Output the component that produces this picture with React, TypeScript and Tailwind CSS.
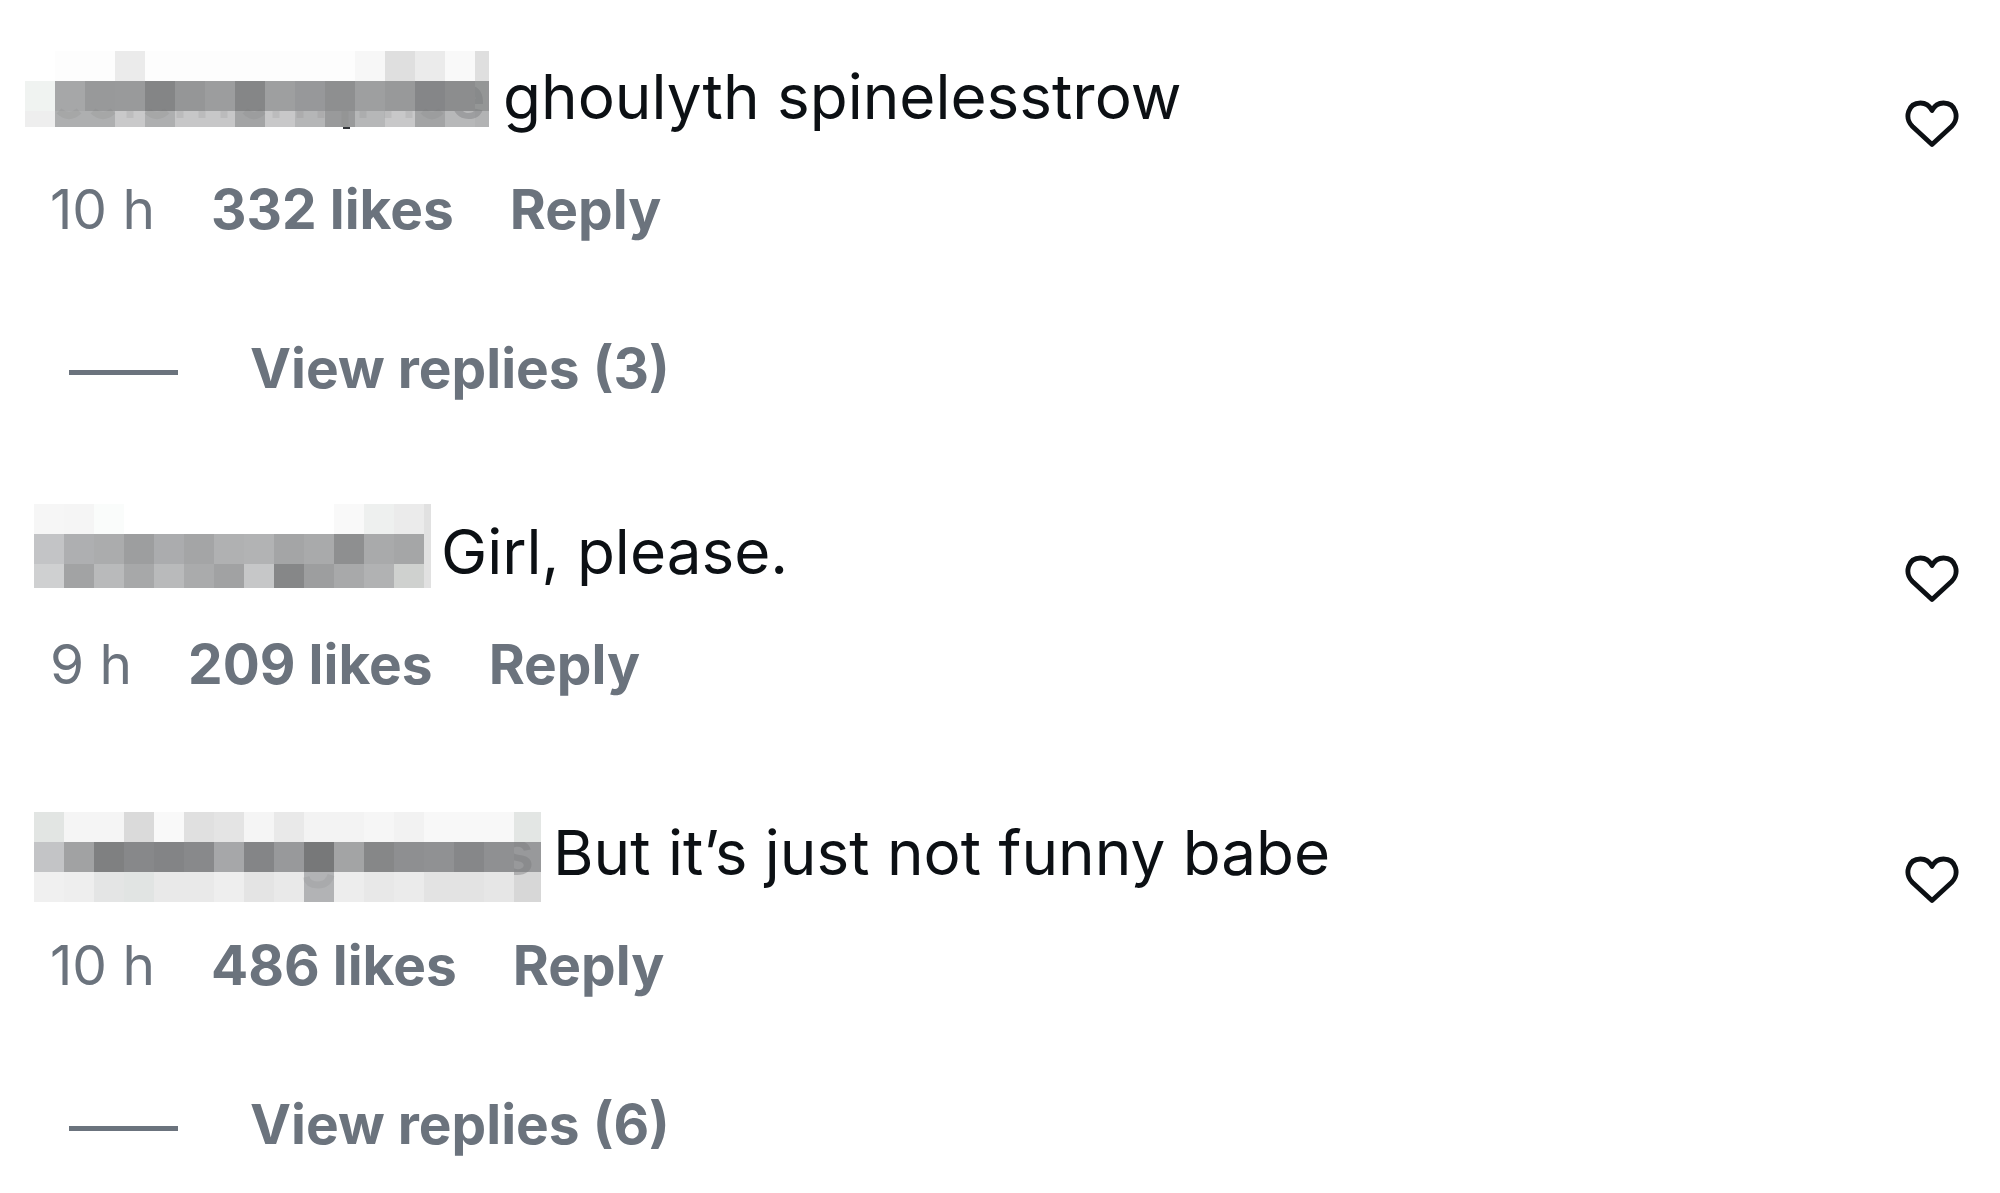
type Tile = [x: number, y: number, w: number, h: number, fill: string]

type Mask = {
  width: number
  tiles: Tile[]
  // faint strokes that show through below the tiles
  traces?: string
  letter?: { char: string; x: number; y: number; clip: string }
}

type Comment = {
  id: number
  text: string
  age: string
  likes: number
  replies: number
  mask: Mask
}

// Builds one strip of tiles, 30px wide each; the last one may be cut off
function strip(x: number, y: number, h: number, end: number, fills: string[]): Tile[] {
  return fills.map((fill, i) => {
    const left = x + i * 30
    return [left, y, Math.min(30, end - left), h, fill]
  })
}

const comments: Comment[] = [
  {
    id: 1,
    text: 'ghoulyth spinelesstrow',
    age: '10 h',
    likes: 332,
    replies: 3,
    mask: {
      width: 468,
      tiles: [
        ...strip(30, 2, 30, 464, ['#fdfdfd', '#fdfdfd', '#ebebeb', '#fdfdfd', '#fdfdfd', '#fdfdfd', '#fdfdfd', '#fdfdfd', '#fdfdfd', '#fdfdfd', '#f7f7f7', '#dfdfdf', '#ebebeb', '#f9f9f9', '#dfdfdf']),
        ...strip(0, 32, 30, 464, ['#f0f3f1', '#a6a7a8', '#98999a', '#999a9b', '#848586', '#959697', '#9c9d9e', '#858687', '#9e9fa0', '#97989a', '#8e8f90', '#9e9fa0', '#98999a', '#858688', '#8c8d8e', '#959697']),
        ...strip(0, 62, 16, 464, ['#eeeeee', '#aeafb0', '#aeafb0', '#c9c9ca', '#aeafb0', '#c7c7c8', '#c7c7c8', '#a3a4a5', '#c8c8c9', '#b5b6b7', '#999a9b', '#b6b7b8', '#c8c8c9', '#a3a4a5', '#b7b8b9', '#b2b3b4']),
        [318, 78, 7, 2, '#33363a'],
      ],
      traces: 'M34 62q10 9 20 0M68 62q10 9 20 0M105 62v7M122 62q10 9 20 0M155 62v7M177 62v7M199 62v7M220 62q9 9 18 0M251 62v7M275 62v7M296 62v7M320 62v16M338 62v7M363 62v7M384 62v7M398 62q9 9 18 0',
      letter: { char: 'e', x: 425, y: 69, clip: 'M450 32h14v46h-38v-16h24z' },
    },
  },
  {
    id: 2,
    text: 'Girl, please.',
    age: '9 h',
    likes: 209,
    replies: 0,
    mask: {
      width: 406,
      tiles: [
        ...strip(9, 0, 30, 399, ['#f6f6f6', '#f5f5f5', '#fafcfb', '#ffffff', '#ffffff', '#ffffff', '#ffffff', '#ffffff', '#ffffff', '#ffffff', '#f9f9f9', '#eef0ef', '#ebebeb']),
        ...strip(9, 30, 30, 399, ['#c3c4c6', '#aeafb1', '#abacad', '#9d9e9f', '#abacae', '#a4a5a6', '#b0b1b2', '#b2b3b4', '#a4a5a6', '#a9aaab', '#8e8f90', '#a9aaab', '#a5a6a7']),
        ...strip(9, 60, 24, 399, ['#cfd0d1', '#a2a3a4', '#b9babb', '#a7a8a9', '#b9babb', '#aaabac', '#a1a2a3', '#c6c7c8', '#868788', '#9d9e9f', '#a8a9aa', '#b1b2b3', '#cfd1cf']),
        [399, 0, 7, 84, '#e1e1e1'],
      ],
    },
  },
  {
    id: 3,
    text: 'But it’s just not funny babe',
    age: '10 h',
    likes: 486,
    replies: 6,
    mask: {
      width: 518,
      tiles: [
        ...strip(9, 7, 30, 516, ['#e2e5e3', '#f5f5f5', '#f5f5f5', '#dadada', '#f9f9f9', '#e0e0e0', '#e4e4e4', '#f5f5f5', '#e9e9e9', '#f3f3f3', '#f3f3f3', '#f6f6f6', '#f2f2f2', '#f8f8f8', '#f8f8f8', '#f8f8f8', '#e3e6e4']),
        ...strip(9, 37, 30, 516, ['#c3c4c6', '#a1a2a3', '#7f8081', '#87888a', '#838486', '#88898b', '#a6a7a9', '#848587', '#98999b', '#777879', '#a3a4a5', '#868788', '#8e8f91', '#909193', '#868789', '#8f9092', '#98999b']),
        ...strip(9, 67, 30, 516, ['#f0f0f0', '#eeeeee', '#e4e5e5', '#e1e4e3', '#e9e9e9', '#e9e9e9', '#eeeeee', '#e4e4e4', '#e9e9e9', '#b2b3b5', '#ededed', '#e8e8e8', '#ebebeb', '#e3e3e3', '#e3e3e3', '#e6e6e6', '#d7d7d7']),
      ],
      traces: 'M281 72q2 8 12 8t13-10',
      letter: { char: 's', x: 476, y: 69, clip: 'M489 37h27v60h-27z' },
    },
  },
]

function HiddenName({ mask, id }: { mask: Mask; id: string }) {
  return (
    <svg width={mask.width} height="100" className="shrink-0" aria-hidden="true">
      <g shapeRendering="crispEdges">
        {mask.tiles.map(([x, y, w, h, fill], i) => (
          <rect key={i} x={x} y={y} width={w} height={h} fill={fill} />
        ))}
      </g>
      {mask.traces && <path d={mask.traces} fill="none" stroke="#77787a" strokeWidth="7" opacity="0.15" />}
      {mask.letter && (
        <>
          <clipPath id={id}>
            <path d={mask.letter.clip} />
          </clipPath>
          <text
            x={mask.letter.x}
            y={mask.letter.y}
            clipPath={`url(#${id})`}
            fontSize="60"
            fontWeight="600"
            fill="#77787a"
            opacity="0.4"
          >
            {mask.letter.char}
          </text>
        </>
      )}
    </svg>
  )
}

function HeartIcon() {
  return (
    <svg
      viewBox="0 0 54 48"
      className="h-12 w-[54px]"
      fill="none"
      stroke="currentColor"
      strokeWidth="4.8"
      strokeLinejoin="round"
      aria-hidden="true"
    >
      <path d="M27 44.5 7.5 26.500C-1 18 3 3 15.500 3c5 0 9 2.500 11.500 7.500C29.500 5.500 33.500 3 38.500 3 51 3 55 18 46.500 26.500Z" />
    </svg>
  )
}

function CommentRow({ comment }: { comment: Comment }) {
  return (
    <li className="flex items-start justify-between pb-[107px] last:pb-0">
      <div>
        <div className="flex gap-2.5">
          <HiddenName mask={comment.mask} id={`name-${comment.id}`} />
          <p className="pt-2 text-[62px] leading-[80px] text-[#0c1014]">{comment.text}</p>
        </div>

        <div className="mt-[26px] flex gap-14 pl-[25px] text-[55px] leading-[68px]">
          <span>{comment.age}</span>
          <button type="button" className="font-bold">{comment.likes} likes</button>
          <button type="button" className="font-bold">Reply</button>
        </div>

        {comment.replies > 0 && (
          <button type="button" className="mt-24 flex items-center pl-11 text-[55px] leading-[58px] font-bold">
            <span className="mt-2 mr-[72px] h-[5px] w-[109px] bg-current" />
            View replies ({comment.replies})
          </button>
        )}
      </div>

      <button type="button" aria-label="Like" className="mt-[51px] text-[#0c1014]">
        <HeartIcon />
      </button>
    </li>
  )
}

export default function App() {
  return (
    <main className="min-h-screen bg-white font-['Inter',sans-serif] text-[#6b737d]">
      <ul className="pt-[49px] pr-[41px] pl-[25px]">
        {comments.map((comment) => (
          <CommentRow key={comment.id} comment={comment} />
        ))}
      </ul>
    </main>
  )
}
